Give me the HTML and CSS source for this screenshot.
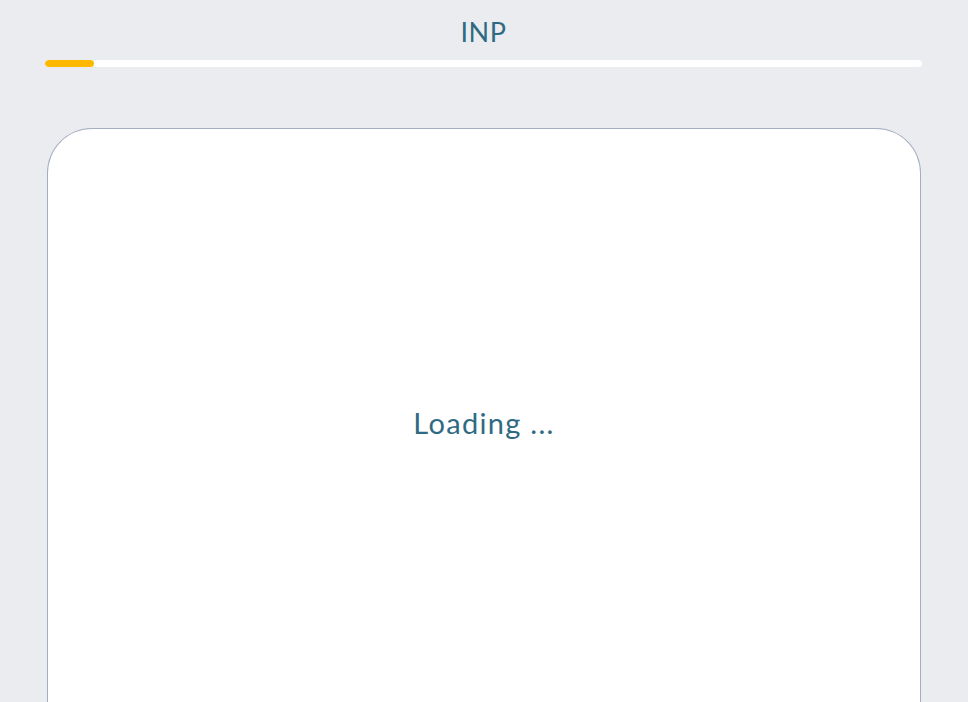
FILE: index.html
```html
<!DOCTYPE html>
<html>
<head>
<meta charset="utf-8">
<link rel="stylesheet" href="styles.css">
</head>
<body>
<div class="page">
  <header class="head">
    <h1 class="title">INP</h1>
    <div class="progress"><div class="progress-fill" style="width:49px"></div></div>
  </header>
  <main class="card">
    <p class="loading">Loading ...</p>
  </main>
</div>
</body>
</html>
```
FILE: styles.css
```css
html, body {
  margin: 0;
  padding: 0;
  height: 100%;
  background: #ebecf0;
  overflow: hidden;
}
.page {
  display: flex;
  flex-direction: column;
  height: 100%;
  padding: 0 46px 0 45px;
  box-sizing: border-box;
  font-family: "Lato", "Noto Sans", sans-serif;
}
.head {
  display: flex;
  flex-direction: column;
  align-items: center;
}
.title {
  margin: 14px 0 0;
  height: 46px;
  line-height: 36px;
  font-size: 27px;
  font-weight: 400;
  color: #2f6a82;
  letter-spacing: 0.5px;
}
.progress {
  width: 100%;
  height: 7px;
  border-radius: 4px;
  background: #ffffff;
  overflow: hidden;
}
.progress-fill {
  height: 100%;
  background: #ffb800;
  border-radius: 4px;
}
.card {
  margin: 61px 1px 0 2px;
  flex: 1;
  background: #ffffff;
  border: 1.5px solid #a3aec1;
  border-bottom: none;
  border-radius: 45px 45px 0 0;
  display: flex;
  align-items: flex-start;
  justify-content: center;
}
.loading {
  margin: 274px 0 0;
  font-size: 29px;
  line-height: 40px;
  color: #2f6a82;
  letter-spacing: 1.3px;
}
```
